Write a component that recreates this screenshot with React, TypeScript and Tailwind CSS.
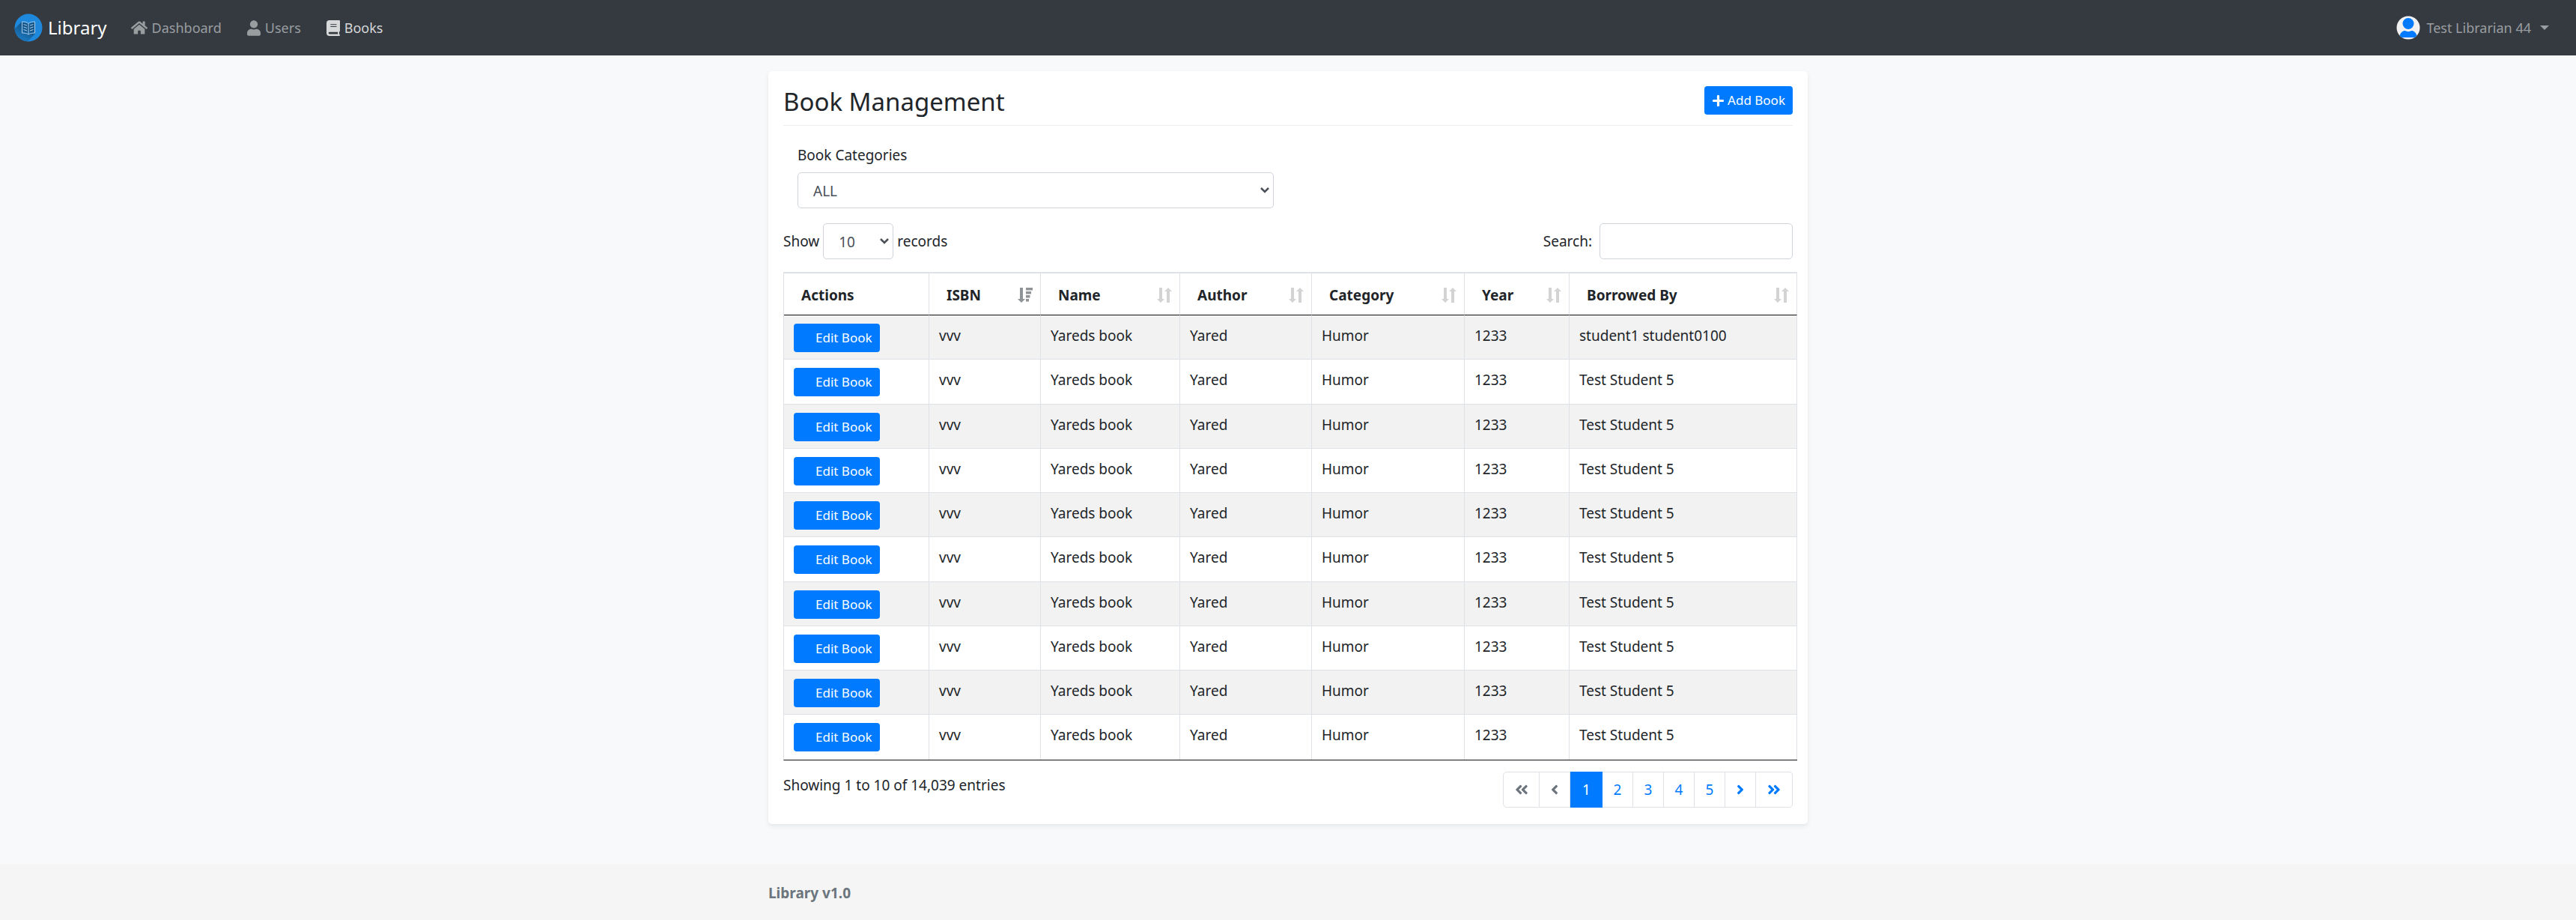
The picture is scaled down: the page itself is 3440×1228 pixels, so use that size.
import React from "react";
import { FaHome, FaUser, FaPlus, FaAngleLeft, FaAngleRight, FaAngleDoubleLeft, FaAngleDoubleRight } from "react-icons/fa";

const columns = [
  { label: "Actions", width: "w-[194px]", sort: "none" },
  { label: "ISBN", width: "w-[149px]", sort: "active" },
  { label: "Name", width: "w-[186px]", sort: "both" },
  { label: "Author", width: "w-[176px]", sort: "both" },
  { label: "Category", width: "w-[204px]", sort: "both" },
  { label: "Year", width: "w-[140px]", sort: "both" },
  { label: "Borrowed By", width: "", sort: "both" },
];

const rows = ["student1 student0100", ...Array(9).fill("Test Student 5")].map((borrower) => ({
  isbn: "vvv",
  name: "Yareds book",
  author: "Yared",
  category: "Humor",
  year: "1233",
  borrower,
}));

function Logo() {
  return (
    <svg viewBox="0 0 38 38" className="size-[38px]" aria-hidden="true">
      <defs>
        <clipPath id="disc"><circle cx="19" cy="19" r="18.5" /></clipPath>
        <linearGradient id="shade" x1="0.7" y1="0.3" x2="0.3" y2="1">
          <stop offset="0" stopColor="#14568a" />
          <stop offset="1" stopColor="#1c7fcc" />
        </linearGradient>
      </defs>
      <circle cx="19" cy="19" r="18.500" fill="#1e88dc" />
      <g clipPath="url(#disc)">
        <path d="M10 11 L-2 23 L6 38 L17 38 L27.500 27.500 V11 L19 13.500 Z" fill="url(#shade)" />
      </g>
      <path d="M10.500 11 V26 C14 26 17 26.500 19 28 C21 26.500 24 26 27.500 26 V11 C24 11 21 11.500 19 13.500 C17 11.500 14 11 10.500 11 Z M19 13.500 V28" fill="none" stroke="#a9cdea" strokeWidth="1" />
      <path d="M12.500 14.500 L17 16 M12.500 18 L17 19.500 M12.500 21.500 L17 23 M25.500 14.500 L21 16 M25.500 18 L21 19.500 M25.500 21.500 L21 23" stroke="#a9cdea" strokeWidth="1" />
    </svg>
  );
}

function BookIcon() {
  return (
    <svg viewBox="0 0 18 21" className="h-[21px] w-[18px]" aria-hidden="true">
      <path fillRule="evenodd" fill="currentColor" d="M4 0 H17 Q18 0 18 1 V14 Q18 15 17 15.500 V18.500 Q18 19 18 20 Q18 21 17 21 H4 Q0 21 0 17 V4 Q0 0 4 0 Z M4 15.800 Q2.700 15.800 2.700 17.100 Q2.700 18.400 4 18.400 H15.200 V15.800 Z M5.300 5.200 V6.300 H13.500 V5.200 Z M5.300 8 V9.100 H13.500 V8 Z" />
    </svg>
  );
}

function Avatar() {
  return (
    <svg viewBox="0 0 32 32" className="size-8" aria-hidden="true">
      <defs><clipPath id="face"><circle cx="16" cy="16" r="15.500" /></clipPath></defs>
      <circle cx="16" cy="16" r="15.500" fill="#f1f1f1" />
      <g clipPath="url(#face)" fill="#007bff">
        <circle cx="16" cy="10.500" r="7.500" />
        <path d="M4 29 C5 22 9 20 11.500 20 C14.500 21.500 17.500 21.500 20.500 20 C23 20 27 22 28 29 Z" />
      </g>
    </svg>
  );
}

function SortBoth() {
  return (
    <svg viewBox="0 0 20 20" className="h-5 w-5" fill="#d3d3d3" aria-hidden="true">
      <path d="M3 0 H7 V15 H10 L5 20 L0 15 H3 Z M13 20 H17 V5 H20 L15 0 L10 5 H13 Z" />
    </svg>
  );
}

function SortActive() {
  return (
    <svg viewBox="0 0 20 20" className="h-5 w-5" fill="#909497" aria-hidden="true">
      <path d="M3 0 H7 V15 H10 L5 20 L0 15 H3 Z M11 0 H20 V3.500 H11 Z M11 5 H18 V8.500 H11 Z M11 10 H16.500 V13.500 H11 Z M11 15 H15 V18.500 H11 Z" />
    </svg>
  );
}

function Chevron() {
  return (
    <svg viewBox="0 0 12 8" className="pointer-events-none absolute right-1.5 top-5 h-2 w-3" fill="none" stroke="#495057" strokeWidth="2.500" aria-hidden="true">
      <path d="M1 1 L6 6 L11 1" />
    </svg>
  );
}

const field = "h-12 w-full appearance-none rounded-[5px] border border-[#ced4da] bg-white px-5 pt-0.5 text-[19px] text-[#495057]";
const page = "flex h-12 items-center justify-center border-y border-r border-[#dee2e6] bg-white text-[#007bff]";

export default function App() {
  return (
    <div className="flex min-h-screen flex-col bg-[#f8f9fa] font-['Noto_Sans','Open_Sans',sans-serif] text-[19px] leading-[30px] text-[#212529]">
      <nav className="flex h-[74px] items-center bg-[#343a40] pl-[19px] pr-9 text-lg text-[#9a9da0]">
        <a href="#" className="flex items-center gap-[7px] text-2xl text-white"><Logo />Library</a>
        <div className="ml-8 flex flex-1 items-center gap-[34px]">
          <a href="#" className="flex items-center gap-1.5"><FaHome className="size-[22px]" />Dashboard</a>
          <a href="#" className="flex items-center gap-1.5"><FaUser className="h-[21px] w-[18px]" />Users</a>
          <a href="#" className="flex items-center gap-1.5 text-[#d6d8d9]"><BookIcon />Books</a>
        </div>
        <button className="flex items-center gap-2">
          <Avatar />Test Librarian 44
          <span className="ml-1 border-x-[6px] border-t-[6px] border-x-transparent border-t-[#9a9da0]" />
        </button>
      </nav>

      <main className="mx-auto mt-[21px] w-full max-w-[1388px] flex-1">
        <section className="rounded-[5px] bg-white px-5 pt-5 pb-[22px] shadow-[0_3px_6px_rgba(0,0,0,0.08)]">
          <header className="flex h-[53px] items-start justify-between border-b border-[#eeeeee]">
            <h1 className="text-[33px] leading-[42px] font-normal">Book Management</h1>
            <button className="flex h-[38px] items-center gap-1 rounded bg-[#007bff] px-2.5 text-[17px] text-white"><FaPlus className="size-[17px]" />Add Book</button>
          </header>

          <div className="mt-6 w-1/2 px-[19px]">
            <label htmlFor="category" className="block">Book Categories</label>
            <div className="relative mt-2">
              <select id="category" className={field}><option>ALL</option></select>
              <Chevron />
            </div>
          </div>

          <div className="mt-5 flex items-center justify-between">
            <label className="flex items-center gap-[5px]">
              Show
              <span className="relative w-[94px]">
                <select className={field}><option>10</option></select>
                <Chevron />
              </span>
              records
            </label>
            <label className="flex items-center gap-2.5">
              Search:
              <input type="search" className="h-12 w-[258px] rounded-[5px] border border-[#ced4da] bg-white px-4" />
            </label>
          </div>

          <table className="mt-[17px] -mr-1.5 w-[calc(100%+6px)] table-fixed border-separate border-spacing-0 border-l border-b border-l-[#dee2e6] border-b-[#111111]">
            <thead>
              <tr className="h-[58px]">
                {columns.map((c) => (
                  <th key={c.label} scope="col" className={`${c.width} border-t-2 border-r border-b border-t-[#dee2e6] border-r-[#dee2e6] border-b-[#111111] pt-0.5 pl-[23px] pr-2.5 text-left font-bold`}>
                    <div className="flex items-center justify-between">
                      {c.label}
                      {c.sort === "both" && <SortBoth />}
                      {c.sort === "active" && <SortActive />}
                    </div>
                  </th>
                ))}
              </tr>
            </thead>
            <tbody>
              {rows.map((r, i) => (
                <tr key={i} className="h-[59px] odd:bg-[#f2f2f2] [&:nth-child(4n+2)]:h-[60px] [&:last-child>td]:border-b-0 [&>td]:border-r [&>td]:border-b [&>td]:border-[#dee2e6] [&>td]:px-[13px] [&>td]:pt-3 [&>td:first-child]:pt-[11px] [&>td]:align-top">
                  <td><button className="flex h-[38px] items-center rounded bg-[#007bff] pl-[29px] pr-2.5 text-[17px] text-white">Edit Book</button></td>
                  <td>{r.isbn}</td>
                  <td>{r.name}</td>
                  <td>{r.author}</td>
                  <td>{r.category}</td>
                  <td>{r.year}</td>
                  <td>{r.borrower}</td>
                </tr>
              ))}
            </tbody>
          </table>

          <div className="mt-[15px] flex items-start justify-between">
            <p className="pt-[3px]">Showing 1 to 10 of 14,039 entries</p>
            <nav aria-label="Pages" className="flex">
              <button aria-label="First" className={`${page} w-[49px] rounded-l-[5px] border-l`}><FaAngleDoubleLeft className="size-5" color="#6c757d" /></button>
              <button aria-label="Previous" className={`${page} w-[41px]`}><FaAngleLeft className="size-5" color="#6c757d" /></button>
              <button className="h-12 w-[43px] bg-[#007bff] text-white">1</button>
              {["2", "3", "4", "5"].map((n) => (
                <button key={n} className={`${page} w-[41px]`}>{n}</button>
              ))}
              <button aria-label="Next" className={`${page} w-[41px]`}><FaAngleRight className="size-5" /></button>
              <button aria-label="Last" className={`${page} w-[49px] rounded-r-[5px]`}><FaAngleDoubleRight className="size-5" /></button>
            </nav>
          </div>
        </section>
      </main>

      <footer className="mt-[54px] flex h-[75px] items-center bg-[#f5f5f5]">
        <p className="mx-auto w-full max-w-[1388px] font-bold text-[#6c757d]">Library v1.0</p>
      </footer>
    </div>
  );
}
